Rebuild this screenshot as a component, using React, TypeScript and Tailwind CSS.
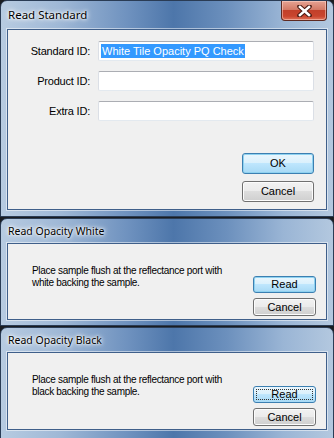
import React from "react";

const frameBg =
  "bg-[linear-gradient(90deg,#b7cbe1_0%,#9fb8d6_18%,#6f92bf_38%,#4d76aa_52%,#6c90bd_68%,#9ab5d5_85%,#b3c8df_100%)]";

const sans = '"Liberation Sans", Arial, sans-serif';

function Btn({ label, variant, w, h }: { label: string; variant: "normal" | "default" | "focus"; w: string; h: string }) {
  const base = `${w} ${h} flex items-center justify-center rounded-[3px] text-[11px] text-black`;
  if (variant === "default") {
    return (
      <div className={`${base} border border-[#3c7fb1] bg-[linear-gradient(180deg,#eaf6fd_0%,#d9f0fc_50%,#bee6fd_50%,#a7d9f5_100%)] shadow-[inset_0_0_0_1px_#8fd2f0]`}>
        <span style={{ fontFamily: sans }}>{label}</span>
      </div>
    );
  }
  if (variant === "focus") {
    return (
      <div className={`${base} border border-[#3c7fb1] bg-[linear-gradient(180deg,#eaf6fd_0%,#d9f0fc_50%,#bee6fd_50%,#a7d9f5_100%)] p-[2px]`}>
        <div className="w-full h-full border border-dotted border-[#333] flex items-center justify-center">
          <span style={{ fontFamily: sans }}>{label}</span>
        </div>
      </div>
    );
  }
  return (
    <div className={`${base} border border-[#707070] bg-[linear-gradient(180deg,#f2f2f2_0%,#ebebeb_50%,#dddddd_50%,#cfcfcf_100%)] shadow-[inset_0_0_0_1px_#fcfcfc]`}>
      <span style={{ fontFamily: sans }}>{label}</span>
    </div>
  );
}

function TitleText({ text, size }: { text: string; size: string }) {
  return (
    <span
      className={`${size} leading-none text-black whitespace-nowrap`}
      style={{ fontFamily: '"Noto Sans", "Open Sans", sans-serif', textShadow: "0 0 6px #fff, 0 0 4px #fff, 0 0 2px #fff" }}
    >
      {text}
    </span>
  );
}

function CloseButton() {
  return (
    <div className="w-[46px] h-[20px] rounded-b-[4px] border border-t-0 border-[#5e2a22] bg-[linear-gradient(180deg,#e6a393_0%,#d47a66_45%,#c2402a_50%,#c9452e_80%,#e0735a_100%)] flex items-center justify-center shadow-[inset_0_0_0_1px_rgba(255,220,210,0.5)]">
      <svg width="15" height="12" viewBox="0 0 15 12">
        <path d="M2.5 1.5 L12.5 10.5 M12.5 1.5 L2.5 10.5" stroke="#4a1a12" strokeWidth="4.6" strokeLinecap="round" />
        <path d="M3 2 L12 10 M12 2 L3 10" stroke="#ffffff" strokeWidth="2.6" strokeLinecap="square" />
      </svg>
    </div>
  );
}

function Input({ children }: { children?: React.ReactNode }) {
  return (
    <div className="h-[20px] w-[216px] bg-white border border-[#abadb3] border-l-[#dbdfe6] border-r-[#dbdfe6] border-b-[#e3e9ef] rounded-[2px] flex items-center pl-[2px]">
      {children}
    </div>
  );
}

function Label({ text }: { text: string }) {
  return (
    <div
      className="h-[20px] flex items-center justify-end text-[11px] text-black whitespace-nowrap"
      style={{ fontFamily: sans, letterSpacing: "-0.2px" }}
    >
      {text}
    </div>
  );
}

function SmallDialog({ title, second, variant, h }: { title: string; second: string; variant: "default" | "focus"; h: string }) {
  return (
    <div className={`${frameBg} ${h} rounded-t-[7px] border border-[#2a3c55] flex flex-col px-[6px] pb-[5px] shrink-0`}>
      <div className="h-[24px] flex items-center pl-[1px] shrink-0">
        <TitleText text={title} size="text-[10.5px]" />
      </div>
      <div className="border border-[#3f5f8a] shadow-[0_0_0_1px_rgba(255,255,255,0.5)] bg-[#f0f0f0] h-[78px] flex">
        <div
          className="flex-1 pl-[24px] pt-[21px] text-[10px] leading-[12px] text-black whitespace-nowrap"
          style={{ fontFamily: sans, letterSpacing: "-0.3px" }}
        >
          <div>Place sample flush at the reflectance port with</div>
          <div>{second} backing the sample.</div>
        </div>
        <div className="flex flex-col justify-end gap-[5px] pr-[10px] pb-[3px]">
          <Btn label="Read" variant={variant} w="w-[63px]" h="h-[17px]" />
          <Btn label="Cancel" variant="normal" w="w-[63px]" h="h-[18px]" />
        </div>
      </div>
    </div>
  );
}

export default function App() {
  return (
    <div className="w-[334px] h-[438px] bg-[#1a1d22] flex flex-col gap-[1px] overflow-hidden">
      {/* Window 1 */}
      <div className={`${frameBg} h-[217px] rounded-t-[7px] border border-[#2a3c55] flex flex-col px-[6px] pb-[6px] shrink-0`}>
        <div className="h-[28px] flex items-start justify-between shrink-0">
          <div className="h-[27px] pl-[1px] flex items-center">
            <TitleText text="Read Standard" size="text-[11.5px]" />
          </div>
          <div>
            <CloseButton />
          </div>
        </div>
        <div className="border border-[#3f5f8a] shadow-[0_0_0_1px_rgba(255,255,255,0.5)] bg-[#f0f0f0] flex-1 flex flex-col pt-[11px] pr-[12px] pb-[7px]">
          <div className="grid grid-cols-[82px_216px] gap-x-[8px] gap-y-[10px]">
            <Label text="Standard ID:" />
            <Input>
              <span
                className="bg-[#3399ff] text-white text-[11px] leading-[14px] px-[1px] whitespace-nowrap"
                style={{ fontFamily: sans }}
              >
                White Tile Opacity PQ Check
              </span>
            </Input>
            <Label text="Product ID:" />
            <Input />
            <Label text="Extra ID:" />
            <Input />
          </div>
          <div className="flex-1" />
          <div className="flex flex-col items-end gap-[7px]">
            <Btn label="OK" variant="default" w="w-[72px]" h="h-[21px]" />
            <Btn label="Cancel" variant="normal" w="w-[72px]" h="h-[21px]" />
          </div>
        </div>
      </div>
      <SmallDialog title="Read Opacity White" second="white" variant="default" h="h-[108px]" />
      <SmallDialog title="Read Opacity Black" second="black" variant="focus" h="h-[112px]" />
    </div>
  );
}
